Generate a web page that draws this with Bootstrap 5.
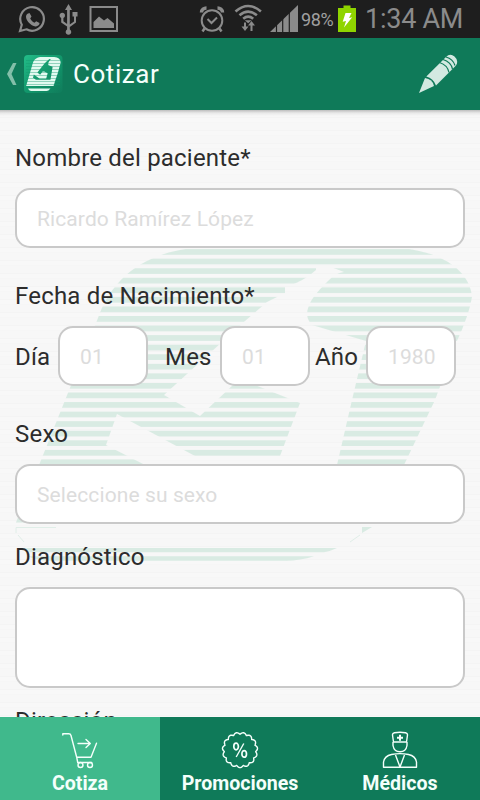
<!DOCTYPE html>
<html lang="es">
<head>
<meta charset="utf-8">
<meta name="viewport" content="width=device-width, initial-scale=1">
<title>Cotizar</title>
<link href="https://cdn.jsdelivr.net/npm/bootstrap@5.3.0/dist/css/bootstrap.min.css" rel="stylesheet">
<style>
body{font-family:Roboto,"Noto Sans",sans-serif;background:#f7f7f7;color:#2c2c2c}
svg{display:block;flex:none}
.screen{width:480px;height:800px}
.statusbar{height:38px;background:#1e1e1e;color:#8b8b8b;padding-left:18px}
.pct{font-size:18px;line-height:38px;letter-spacing:-.4px;width:33px;margin-left:3px;color:#a0a0a0;white-space:nowrap;padding-top:1px}
.clock{font-size:27px;line-height:38px;letter-spacing:-.25px;margin-left:9px;white-space:nowrap}
.appbar{height:72px;background:#0f7a59;padding:0 22px 0 6px}
.appbar h1{font-size:26px;font-weight:400;line-height:72px;margin-left:10px;letter-spacing:.55px;color:#f4fffb}
.content{background:linear-gradient(#bdbdbd,#e9e9e9 3px,rgba(247,247,247,0) 6px),repeating-linear-gradient(#f7f7f7 0 7px,#f4f4f4 7px 8px,#f8f8f8 8px 12px,#f6f6f6 12px 13px)}
.watermark{z-index:0}
.fields{z-index:1;padding:34px 15px 0}
.fields label{font-size:24px;line-height:28px;letter-spacing:.2px;display:block;white-space:nowrap}
.fields .form-control{border:2px solid #c9c9c9;border-radius:15px;height:60px;padding:2px 10px 0 20px;font-size:21px;letter-spacing:.1px;background:#fff}
.fields .form-control::placeholder{color:#dcdcdc;opacity:1}
.fields textarea.form-control{height:101px;resize:none}
.group{margin-bottom:34px}
.group-tight{margin-bottom:19px}
.gap-label{margin-bottom:16px}
.fields .short{width:90px;flex:none}
.date-row label{padding-top:1px}
.l-dia{width:43px}.l-mes{width:55px;margin-left:17px}.l-ano{width:51px;margin-left:5px}
.tabs{height:83px;background:#0f7a59;z-index:2}
.tabs a{color:#f4fffb;font-weight:700;font-size:19.600px;line-height:24px;padding-top:13px}
.tabs a.active{background:#40b98c}
.tabs span{margin-top:2px}
</style>
</head>
<body>
<div class="screen d-flex flex-column overflow-hidden">
  <div class="statusbar d-flex align-items-center flex-shrink-0">
    <svg width="28" height="38" viewBox="18 0 28 38" fill="none" stroke="#8b8b8b" stroke-width="2.2"><path d="M20 31l1.800-6.300A11.800 11.800 0 1 1 26.500 29.300z"/><path d="M27.500 13.800l2-.8 2 3.600-1.300 1.900c1 2 2.200 3.200 4.300 4.200l1.700-1.500 3.300 1.900c.3 2-2 3.500-4 3.300-5-.5-9.500-5.500-9.500-9.800.1-1.200.6-2.200 1.500-2.800z" fill="#8b8b8b" stroke="none"/></svg>
    <svg class="ms-2" width="26" height="38" viewBox="54 0 26 38" fill="#8b8b8b"><path d="M68.500 4l3.500 6h-2.200v14.500l4.200-3v-5h-1.500V12h5v4.500h-1.500v6l-6.200 4.500v2.500a2.800 2.800 0 1 1-2.700 0V26.500l-5.900-4V18a2.700 2.700 0 1 1 2.200 0v3.200l3.700 2.700V10H65z"/></svg>
    <svg class="ms-2" width="31" height="38" viewBox="88 0 31 38"><path d="M90.500 7h26.500v24h-26.500z" fill="none" stroke="#8b8b8b" stroke-width="2"/><path d="M93.500 28v-6l5.500-5.500 5 4 3.500-2.500 6.500 5.500V28z" fill="#8b8b8b"/></svg>
    <svg style="margin-left:80px" width="28" height="38" viewBox="199 0 28 38" fill="none" stroke="#8b8b8b"><circle cx="212" cy="20.500" r="10.300" stroke-width="2"/><path d="M207.500 19l4 4 5.500-5.500" stroke-width="2"/><path d="M201.500 12.500c0-3 2.500-4.500 5-4.500M222.500 12.500c0-3-2.500-4.500-5-4.500" stroke-width="3.500"/><path d="M204.500 28.500l-2 3M219.500 28.500l2 3" stroke-width="2.500"/></svg>
    <svg style="margin-left:7px" width="30" height="38" viewBox="234 0 30 38" fill="none" stroke="#8b8b8b" stroke-width="2.600"><path d="M235.500 11.500q12.700-11 25.400 0M239.500 15.300q8.700-7.500 17.400 0M243.200 18.700q5-4.200 10 0"/><path d="M244.800 20.300h6.800l-3.400 3z" fill="#8b8b8b" stroke="none"/><path d="M245 22.500V29M251.500 31v-7" stroke-width="2"/><path d="M241.500 26.500h7l-3.500 4.500zM248 25.500h7l-3.500-4.500z" fill="#8b8b8b" stroke="none"/></svg>
    <svg style="margin-left:6px" width="28" height="38" viewBox="270 0 28 38" fill="#8b8b8b"><path d="M270 32L298 5v27z"/><path d="M276.500 22v10M282.700 16v16M289.300 10v22" stroke="#1e1e1e" stroke-width="1.200"/></svg>
    <span class="pct">98%</span>
    <svg style="margin-left:4px" width="18" height="38" viewBox="338 0 18 38"><path d="M343.500 8V5.500h7V8h5.500v24h-18V8z" fill="#8fd400"/><path d="M345.500 13h6l-2.500 5 3.200-.8-8.200 10.300 2-6.500-3.300.8z" fill="#fff"/></svg>
    <span class="clock">1:34 AM</span>
  </div>

  <header class="appbar d-flex align-items-center flex-shrink-0">
    <svg width="11" height="24" viewBox="0 0 11 24"><path d="M7 1h3.500L5.500 12l5 11H7L1 12z" fill="#83bfa9"/></svg>
    <svg style="margin-left:7px" width="39" height="39" viewBox="0 0 39 39">
      <defs>
        <linearGradient id="tile" x1="0" y1="0" x2="1" y2="1"><stop offset="0" stop-color="#23bd89"/><stop offset=".5" stop-color="#12986c"/><stop offset="1" stop-color="#107c5b"/></linearGradient>
      </defs>
      <rect width="38.500" height="38" rx="4" fill="url(#tile)"/>
      <g transform="translate(1 -23.800) scale(.0755 .1045)">
        <rect y="247" width="480" height="290" fill="#e2faf0" mask="url(#emblem)"/>
        <path d="M40 548H337Q310 572 286 572H80Q50 570 40 548z" fill="#e2faf0"/>
      </g>
      <path d="M2 5.500h34M2 8.500h34M2 11.500h34M2 14.500h34M2 17.500h34M2 20.500h34M2 23.500h34M2 26.500h34M2 29.500h34" stroke="#14986d" stroke-width=".8" opacity=".5"/>
    </svg>
    <h1 class="mb-0">Cotizar</h1>
    <svg class="ms-auto" width="40" height="40" viewBox="418 54 40 40"><path d="M419 93l6-15q7.500 1 9 8z" fill="#d3e9e1"/><path d="M426.300 76.500L446 57q4-4 8.500-.5 4.500 4 1.500 9l-20 20q-2.500-7-9.700-9z" fill="#d3e9e1"/><path d="M439.500 62.500q8 2.500 9.500 10M443 59.500q8 2.500 9.500 9.500M446 57q7 2 9 8.500" fill="none" stroke="#107a59" stroke-width="1.200"/></svg>
  </header>

  <main class="content position-relative flex-grow-1 overflow-hidden">
    <svg class="watermark position-absolute top-0 start-0" width="480" height="607" viewBox="0 110 480 607">
      <defs>
        <pattern id="stripes" x="0" y="249.100" width="480" height="9.560" patternUnits="userSpaceOnUse"><rect width="480" height="5.700" fill="#d9ebe3"/></pattern>
        <mask id="emblem" maskUnits="userSpaceOnUse" x="0" y="110" width="480" height="607">
          <path d="M205 247C145 250 112 278 98 318L15 525H378L404 465 435 400 457 341Q469 315 472 297C470 270 440 248 385 247z" fill="#fff"/>
          <path d="M316 268L331 267 344 272Q335 273 328 281C318 291 307 302 307 315Q308 321 312 325L366 341 352 400 337 465H145L106 445 117 414 195 456H280L300 403 255 385H233L200 416 164 395 245 321 267 302 285 293 285 287Q303 282 316 270z" fill="#000"/>
        </mask>
      </defs>
      <rect y="247" width="480" height="278" fill="url(#stripes)" mask="url(#emblem)"/>
      <path d="M22 548H337Q331 551 324 552.200H28zM28 556.200H314Q300 560.500 286 560.800H50Q35 560 28 556.200zM362 527h10l-10 6z" fill="#d9ebe3"/>
      <path d="M16 533v-5.500h40M18 535l6 7M350 542l10-7" fill="none" stroke="#e0eee8" stroke-width="1"/>
    </svg>
    <form class="fields position-relative">
      <div class="group"><label class="gap-label" for="nombre">Nombre del paciente*</label><input class="form-control" id="nombre" placeholder="Ricardo Ramírez López"></div>
      <div class="group">
        <label class="gap-label" for="dia">Fecha de Nacimiento*</label>
        <div class="date-row d-flex align-items-center">
          <label class="l-dia" for="dia">Día</label><input class="form-control short" id="dia" placeholder="01">
          <label class="l-mes" for="mes">Mes</label><input class="form-control short" id="mes" placeholder="01">
          <label class="l-ano" for="ano">Año</label><input class="form-control short" id="ano" placeholder="1980">
        </div>
      </div>
      <div class="group-tight"><label class="gap-label" for="sexo">Sexo</label><input class="form-control" id="sexo" placeholder="Seleccione su sexo"></div>
      <div class="group-tight"><label class="gap-label" for="diag">Diagnóstico</label><textarea class="form-control" id="diag"></textarea></div>
      <label>Dirección</label>
    </form>
  </main>

  <nav class="tabs row g-0 flex-shrink-0">
    <a href="#" class="col active d-flex flex-column align-items-center text-decoration-none">
      <svg width="38" height="40" viewBox="61 730 38 40" fill="none" stroke="#f4fffb" stroke-width="1.400" stroke-linecap="round" stroke-linejoin="round"><path d="M62.800 735v-1.200h6q1.700 0 2.200 1.700l5.700 21.700h14.300l5.500-14M76.700 757.200l1 5.300h14M78 743.500h12M86 739.500l4.300 4-4.300 4"/><circle cx="80.500" cy="765" r="2.500"/><circle cx="90" cy="765" r="2.500"/></svg>
      <span>Cotiza</span></a>
    <a href="#" class="col d-flex flex-column align-items-center text-decoration-none">
      <svg width="38" height="40" viewBox="-19 -20 38 40" fill="none" stroke="#f4fffb" stroke-width="1.400"><path id="seal" stroke-linejoin="round"/><g stroke-width="1.700"><ellipse cx="-3.900" cy="-3.500" rx="2.300" ry="3.300"/><ellipse cx="4.200" cy="3.900" rx="2.300" ry="3.300"/><path d="M3.800-6.500L-3.800 7" stroke-width="1.400"/></g></svg>
      <span>Promociones</span></a>
    <a href="#" class="col d-flex flex-column align-items-center text-decoration-none">
      <svg width="38" height="40" viewBox="381 730 38 40" fill="none" stroke="#f4fffb" stroke-width="1.400" stroke-linejoin="round"><path d="M393.500 742l-1-7q-.2-1.700 2-2.200 5.500-1 11 0 2.200.5 2 2.200l-1 7zM393 742v3.500q1 6.300 7 6.300t7-6.300V742M383.500 767.300V762q1-6 8-7.500 8.500-1.800 17 0 7 1.500 8 7.500v5.300zM395.500 755l4.500 12 4.500-12"/><path d="M400 734.800v6M397 737.800h6" stroke-width="2"/></svg>
      <span>Médicos</span></a>
  </nav>
</div>
<script src="https://cdn.jsdelivr.net/npm/bootstrap@5.3.0/dist/js/bootstrap.bundle.min.js"></script>
<script>
// Scalloped outline of the promotions seal
let d = '';
for (let i = 0; i <= 180; i++) {
  const a = i / 180 * Math.PI * 2;
  const r = 15.7 + 1.9 * Math.abs(Math.cos(a * 7.5 + Math.PI / 4));
  d += (i ? 'L' : 'M') + (r * Math.cos(a)).toFixed(2) + ' ' + (r * Math.sin(a)).toFixed(2);
}
document.getElementById('seal').setAttribute('d', d + 'Z');
</script>
</body>
</html>
